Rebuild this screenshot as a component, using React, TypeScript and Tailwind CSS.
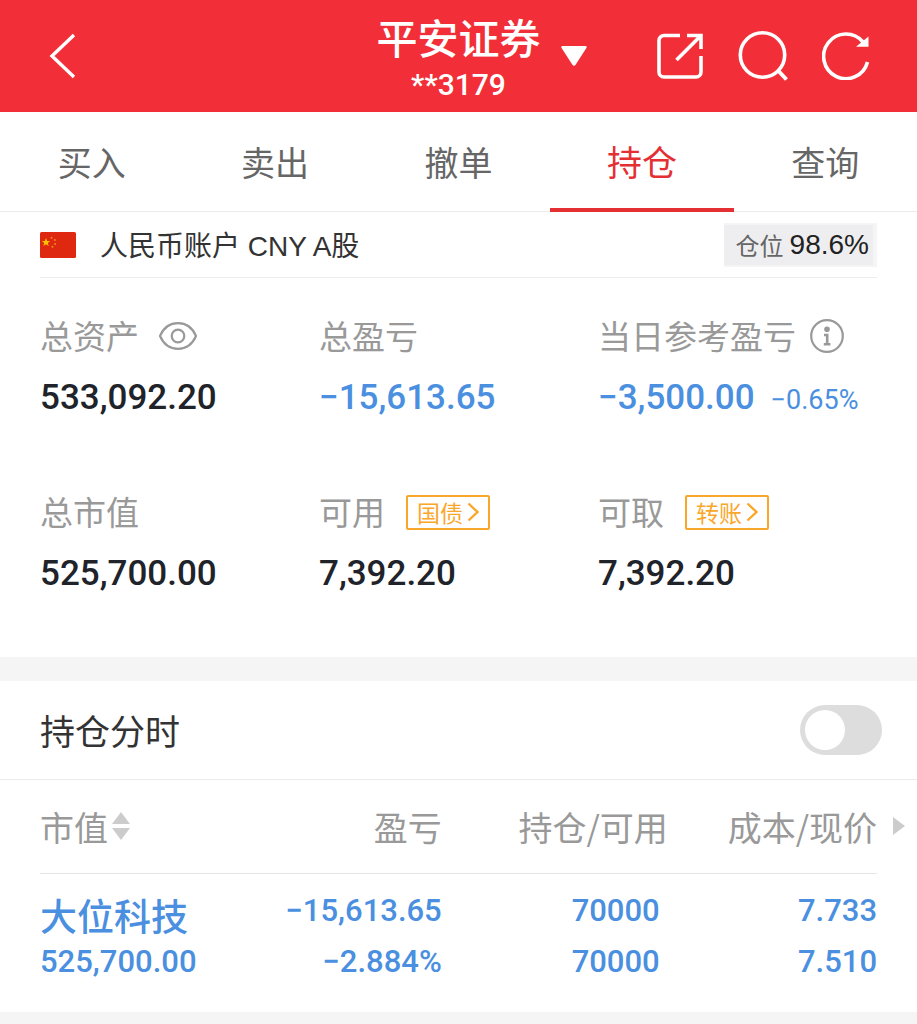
import { useState } from "react";

const tabs = ["买入", "卖出", "撤单", "持仓", "查询"];

function Flag() {
  return (
    <svg className="h-[26px] w-9" viewBox="0 0 36 26" role="img" aria-label="中国">
      <rect width="36" height="26" rx="1.5" fill="#de2910" />
      <path
        d="M6 6l1.100 2.900 3.100.15-2.400 1.900.85 3L6 12.300l-2.600 1.650.85-3L1.800 9.050l3.100-.15z"
        fill="#ffc400"
      />
      <g fill="#f08a1c">
        <circle cx="11.500" cy="5.800" r="1" />
        <circle cx="14.800" cy="8" r="1" />
        <circle cx="15.200" cy="12" r="1" />
        <circle cx="12.500" cy="14.800" r="1" />
      </g>
    </svg>
  );
}

function Eye() {
  return (
    <svg className="h-7 w-[38px]" viewBox="0 0 38 28" fill="none" stroke="#999" strokeWidth="2.200">
      <path d="M1 14C4.500 6 11 1.200 19 1.200S33.500 6 37 14C33.500 22 27 26.800 19 26.800S4.500 22 1 14z" strokeLinejoin="round" />
      <circle cx="19" cy="14" r="6.300" />
    </svg>
  );
}

function Info() {
  return (
    <svg className="size-[34px]" viewBox="0 0 34 34" fill="none" stroke="#999" strokeWidth="2.200">
      <circle cx="17" cy="17" r="15.800" />
      <circle cx="17" cy="10.300" r="2.800" fill="#999" stroke="none" />
      <path d="M14 16h3.200v9M13.800 25.200h6.600" strokeWidth="2.600" />
    </svg>
  );
}

function Tag({ text }: { text: string }) {
  return (
    <button className="ml-[21px] flex h-[35px] items-center gap-1 rounded-[2px] border-2 border-[#f9a72b] px-[9px] text-[23px] leading-none text-[#f9a72b]">
      {text}
      <svg className="h-5 w-3" viewBox="0 0 12 20" fill="none" stroke="currentColor" strokeWidth="2.400">
        <path d="M1.500 1.500L10.500 10 1.500 18.500" />
      </svg>
    </button>
  );
}

function Stat({ label, extra, value, note, down }: { label: string; extra?: React.ReactNode; value: string; note?: string; down?: boolean }) {
  return (
    <div>
      <dt className="flex h-10 items-center whitespace-nowrap text-[33px] text-[#999]">
        {label}
        {extra}
      </dt>
      <dd
        className={`mt-[18px] flex h-12 items-baseline gap-4 whitespace-nowrap font-[Roboto] text-[35px] leading-[48px] font-medium ${
          down ? "text-[#4a8fe0]" : "text-[#20232a]"
        }`}
      >
        {value}
        {note && <span className="text-[27px] font-normal">{note}</span>}
      </dd>
    </div>
  );
}

export default function App() {
  const [tab, setTab] = useState("持仓");
  const [intraday, setIntraday] = useState(false);

  return (
    <main className="min-h-screen bg-[#f5f5f5] font-['Noto_Sans_CJK_SC',sans-serif] text-[#333]">
      <header className="grid h-28 grid-cols-[1fr_auto_1fr] items-center bg-[#f22f38] text-white">
        <button className="ml-12 w-fit" aria-label="返回">
          <svg className="h-[46px] w-7" viewBox="0 0 28 46" fill="none" stroke="currentColor" strokeWidth="3.400">
            <path d="M26 2L4 23 26 44" />
          </svg>
        </button>
        <h1 className="flex flex-col items-center pt-2 font-medium">
          <span className="text-[41px] leading-[50px]">平安证券</span>
          <span className="font-[Roboto] text-[30px] leading-[48px]">**3179</span>
        </h1>
        <div className="flex items-center justify-between pr-[47px] pl-5">
          <button aria-label="切换账户">
            <svg className="h-5 w-[26px]" viewBox="0 0 26 20" fill="currentColor">
              <path d="M1.800 0h22.400c1.300 0 1.900 1 1.200 2L14.600 18.800c-.8 1.200-2.400 1.200-3.200 0L.600 2C-.1 1 .5 0 1.800 0z" />
            </svg>
          </button>
          <div className="flex items-center gap-[34px]">
            <button aria-label="分享">
              <svg className="size-12" viewBox="0 0 48 48" fill="none" stroke="currentColor" strokeWidth="3.600">
                <path d="M24 3.500H8a5 5 0 0 0-5 5V40a5 5 0 0 0 5 5h32a5 5 0 0 0 5-5V24" />
                <path d="M31 3.500h14V17M44 4.500L20.500 28" />
              </svg>
            </button>
            <button aria-label="搜索">
              <svg className="size-[50px]" viewBox="0 0 50 50" fill="none" stroke="currentColor" strokeWidth="3.600">
                <circle cx="24.500" cy="24" r="22.200" />
                <path d="M40 39.500l8.500 9" strokeWidth="4" />
              </svg>
            </button>
            <button aria-label="刷新">
              <svg className="size-12" viewBox="0 0 48 48" fill="none" stroke="currentColor" strokeWidth="3.600">
                <path d="M45.500 30A22.300 22.300 0 1 1 41 10" />
                <path d="M46.500 4.500v10.200H34z" fill="currentColor" stroke="none" />
              </svg>
            </button>
          </div>
        </div>
      </header>

      <nav className="flex h-[100px] border-b border-[#ebebeb] bg-white">
        {tabs.map((name) => (
          <button
            key={name}
            onClick={() => setTab(name)}
            aria-current={tab === name ? "page" : undefined}
            className={`-mb-px flex-1 border-b-4 pt-0.5 ${
              tab === name ? "border-[#e42f33] text-[35px] text-[#e42f33]" : "border-transparent text-[34px] text-[#666]"
            }`}
          >
            {name}
          </button>
        ))}
      </nav>

      <section className="bg-white px-10">
        <div className="flex h-[66px] items-center border-b border-[#ededed]">
          <Flag />
          <h2 className="ml-6 pt-1 font-['Liberation_Sans','Noto_Sans_CJK_SC',sans-serif] text-[28px]">人民币账户 CNY A股</h2>
          <p className="ml-auto flex h-11 items-center gap-1.5 border-y-2 border-r-4 border-[#f5f5f5] bg-[#eeeef0] pr-1 pl-3 text-2xl text-[#666]">
            仓位
            <span className="font-['Liberation_Sans'] text-[28px] text-[#222]">98.6%</span>
          </p>
        </div>
        <dl className="grid grid-cols-3 gap-y-[70px] pt-[38px] pb-[59px]">
          <Stat
            label="总资产"
            extra={
              <button className="ml-5" aria-label="隐藏资产">
                <Eye />
              </button>
            }
            value="533,092.20"
          />
          <Stat label="总盈亏" value="−15,613.65" down />
          <Stat
            label="当日参考盈亏"
            extra={
              <button className="ml-3.5" aria-label="说明">
                <Info />
              </button>
            }
            value="−3,500.00"
            note="−0.65%"
            down
          />
          <Stat label="总市值" value="525,700.00" />
          <Stat label="可用" extra={<Tag text="国债" />} value="7,392.20" />
          <Stat label="可取" extra={<Tag text="转账" />} value="7,392.20" />
        </dl>
      </section>

      <section className="mt-6 bg-white">
        <label className="flex h-[99px] items-center justify-between border-b border-[#ebebeb] pr-[35px] pl-10 text-[35px]">
          持仓分时
          <input
            type="checkbox"
            role="switch"
            checked={intraday}
            onChange={(e) => setIntraday(e.target.checked)}
            className="h-[50px] w-[82px] appearance-none rounded-full bg-[#ddd] p-[5px] before:block before:size-10 before:rounded-full before:bg-white checked:bg-[#e42f33] checked:before:ml-8"
          />
        </label>
        <div className="px-10 pb-[25px]">
          <table className="w-full table-fixed whitespace-nowrap text-right">
            <thead className="text-[34px] text-[#999]">
              <tr className="h-[93px] border-b border-[#e5e5e5]">
                <th className="w-[24%] text-left font-normal">
                  <button className="flex items-center gap-1">
                    市值
                    <svg className="h-7 w-[18px]" viewBox="0 0 18 28" fill="#ccc">
                      <path d="M9 0l9 12H0zM9 28L0 16h18z" />
                    </svg>
                  </button>
                </th>
                <th className="w-[24%] font-normal">盈亏</th>
                <th className="w-[27%] font-normal">持仓/可用</th>
                <th className="relative font-normal">
                  成本/现价
                  <svg className="absolute top-1/2 left-full ml-4 h-[18px] w-3 -translate-y-1/2" viewBox="0 0 12 18" fill="#ccc">
                    <path d="M0 0l12 9-12 9z" />
                  </svg>
                </th>
              </tr>
            </thead>
            <tbody className="font-[Roboto] text-[31px] font-medium text-[#4a8fe0]">
              <tr className="h-16 align-bottom">
                <td className="text-left font-['Noto_Sans_CJK_SC',sans-serif] text-[37px] leading-[44px]">大位科技</td>
                <td className="leading-[52px]">−15,613.65</td>
                <td className="pr-2 leading-[52px]">70000</td>
                <td className="leading-[52px]">7.733</td>
              </tr>
              <tr className="leading-[50px]">
                <td className="text-left">525,700.00</td>
                <td>−2.884%</td>
                <td className="pr-2">70000</td>
                <td>7.510</td>
              </tr>
            </tbody>
          </table>
        </div>
      </section>
    </main>
  );
}
